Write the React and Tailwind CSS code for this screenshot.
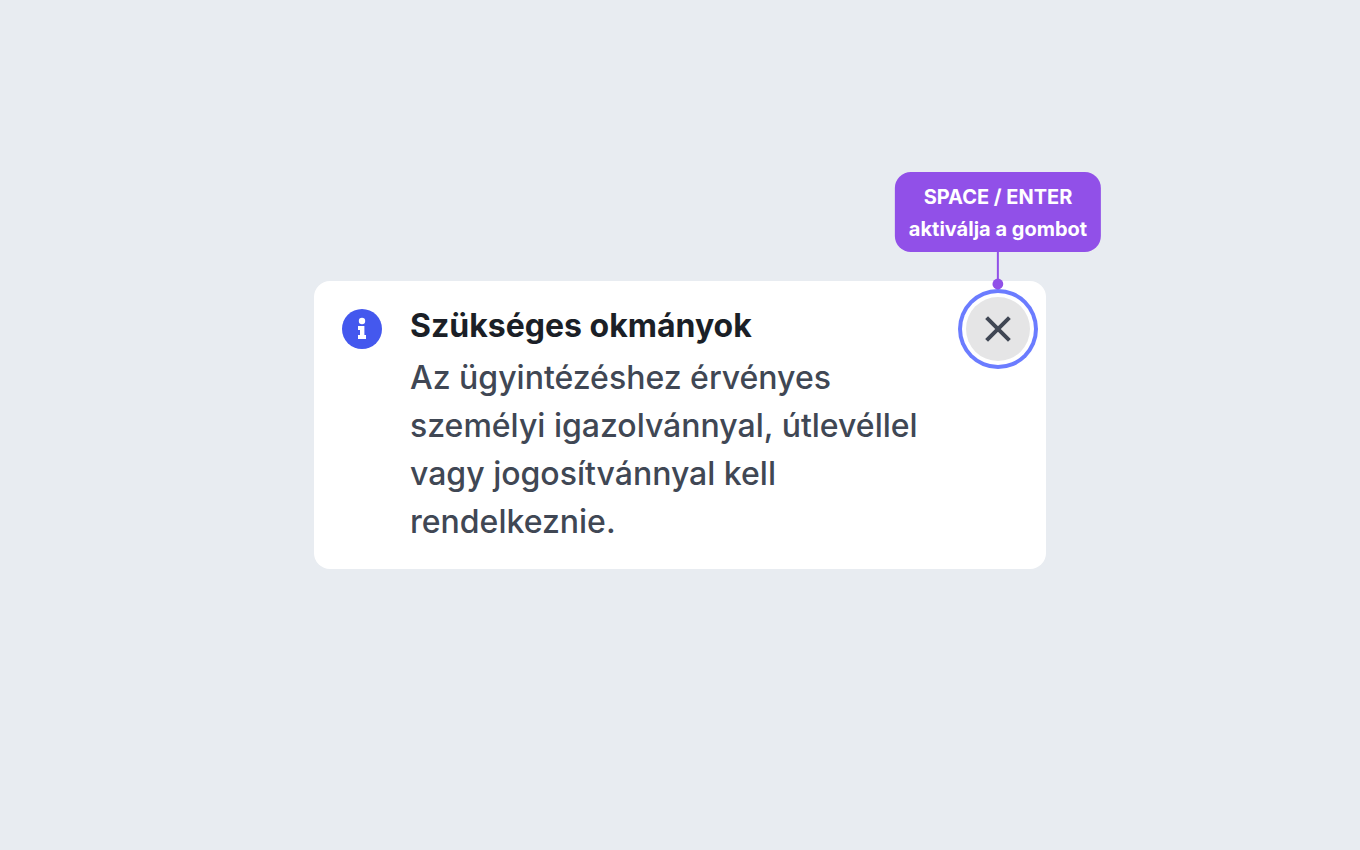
import React from 'react';

function InfoIcon() {
  return (
    <svg className="size-10 shrink-0" viewBox="0 0 40 40" aria-hidden="true">
      <circle cx="20" cy="20" r="20" fill="#4458ee" />
      <circle cx="20" cy="12" r="3.2" fill="#fff" />
      <path d="M16 17h6.4v9H24v4h-8v-4h2v-5h-2z" fill="#fff" />
    </svg>
  );
}

export default function App() {
  return (
    <main className="flex min-h-screen items-center justify-center bg-[#e8ecf1] font-['Inter',sans-serif]">
      <section className="flex w-full max-w-[732px] items-start gap-7 rounded-2xl bg-white pt-6 pr-4 pb-[23px] pl-7">
        <div className="pt-1">
          <InfoIcon />
        </div>
        <div className="min-w-0 flex-1">
          <h1 className="text-[32px] leading-[42px] font-bold text-[#1b1f27]">Szükséges okmányok</h1>
          <p className="mt-[7px] max-w-[520px] text-[32px] leading-[48px] font-medium text-[#404754]">
            Az ügyintézéshez érvényes személyi igazolvánnyal, útlevéllel vagy jogosítvánnyal kell rendelkeznie.
          </p>
        </div>

        {/* Close button with its keyboard hint */}
        <div className="relative -mt-2 shrink-0">
          <button
            type="button"
            aria-label="Bezárás"
            className="flex size-16 items-center justify-center rounded-full bg-[#e5e5e6] ring-4 ring-[#6b7cff] ring-offset-4 ring-offset-white"
          >
            <svg className="size-8" viewBox="0 0 32 32" fill="none" stroke="#404754" strokeWidth="4" aria-hidden="true">
              <path d="M4.6 4.6l22.8 22.8M27.4 4.6l-22.8 22.8" />
            </svg>
          </button>
          <div className="absolute bottom-full left-1/2 mb-2 flex -translate-x-1/2 flex-col items-center">
            <div className="rounded-2xl bg-[#9150e8] px-[14px] pt-[9px] pb-[7px] text-center text-xl leading-8 font-bold whitespace-nowrap text-white">
              SPACE / ENTER
              <br />
              aktiválja a gombot
            </div>
            <svg className="h-[37px] w-3 overflow-visible" viewBox="0 0 12 37" aria-hidden="true">
              <path d="M6 0v32" stroke="#9150e8" strokeWidth="2" />
              <circle cx="6" cy="32" r="5.4" fill="#9150e8" />
            </svg>
          </div>
        </div>
      </section>
    </main>
  );
}
